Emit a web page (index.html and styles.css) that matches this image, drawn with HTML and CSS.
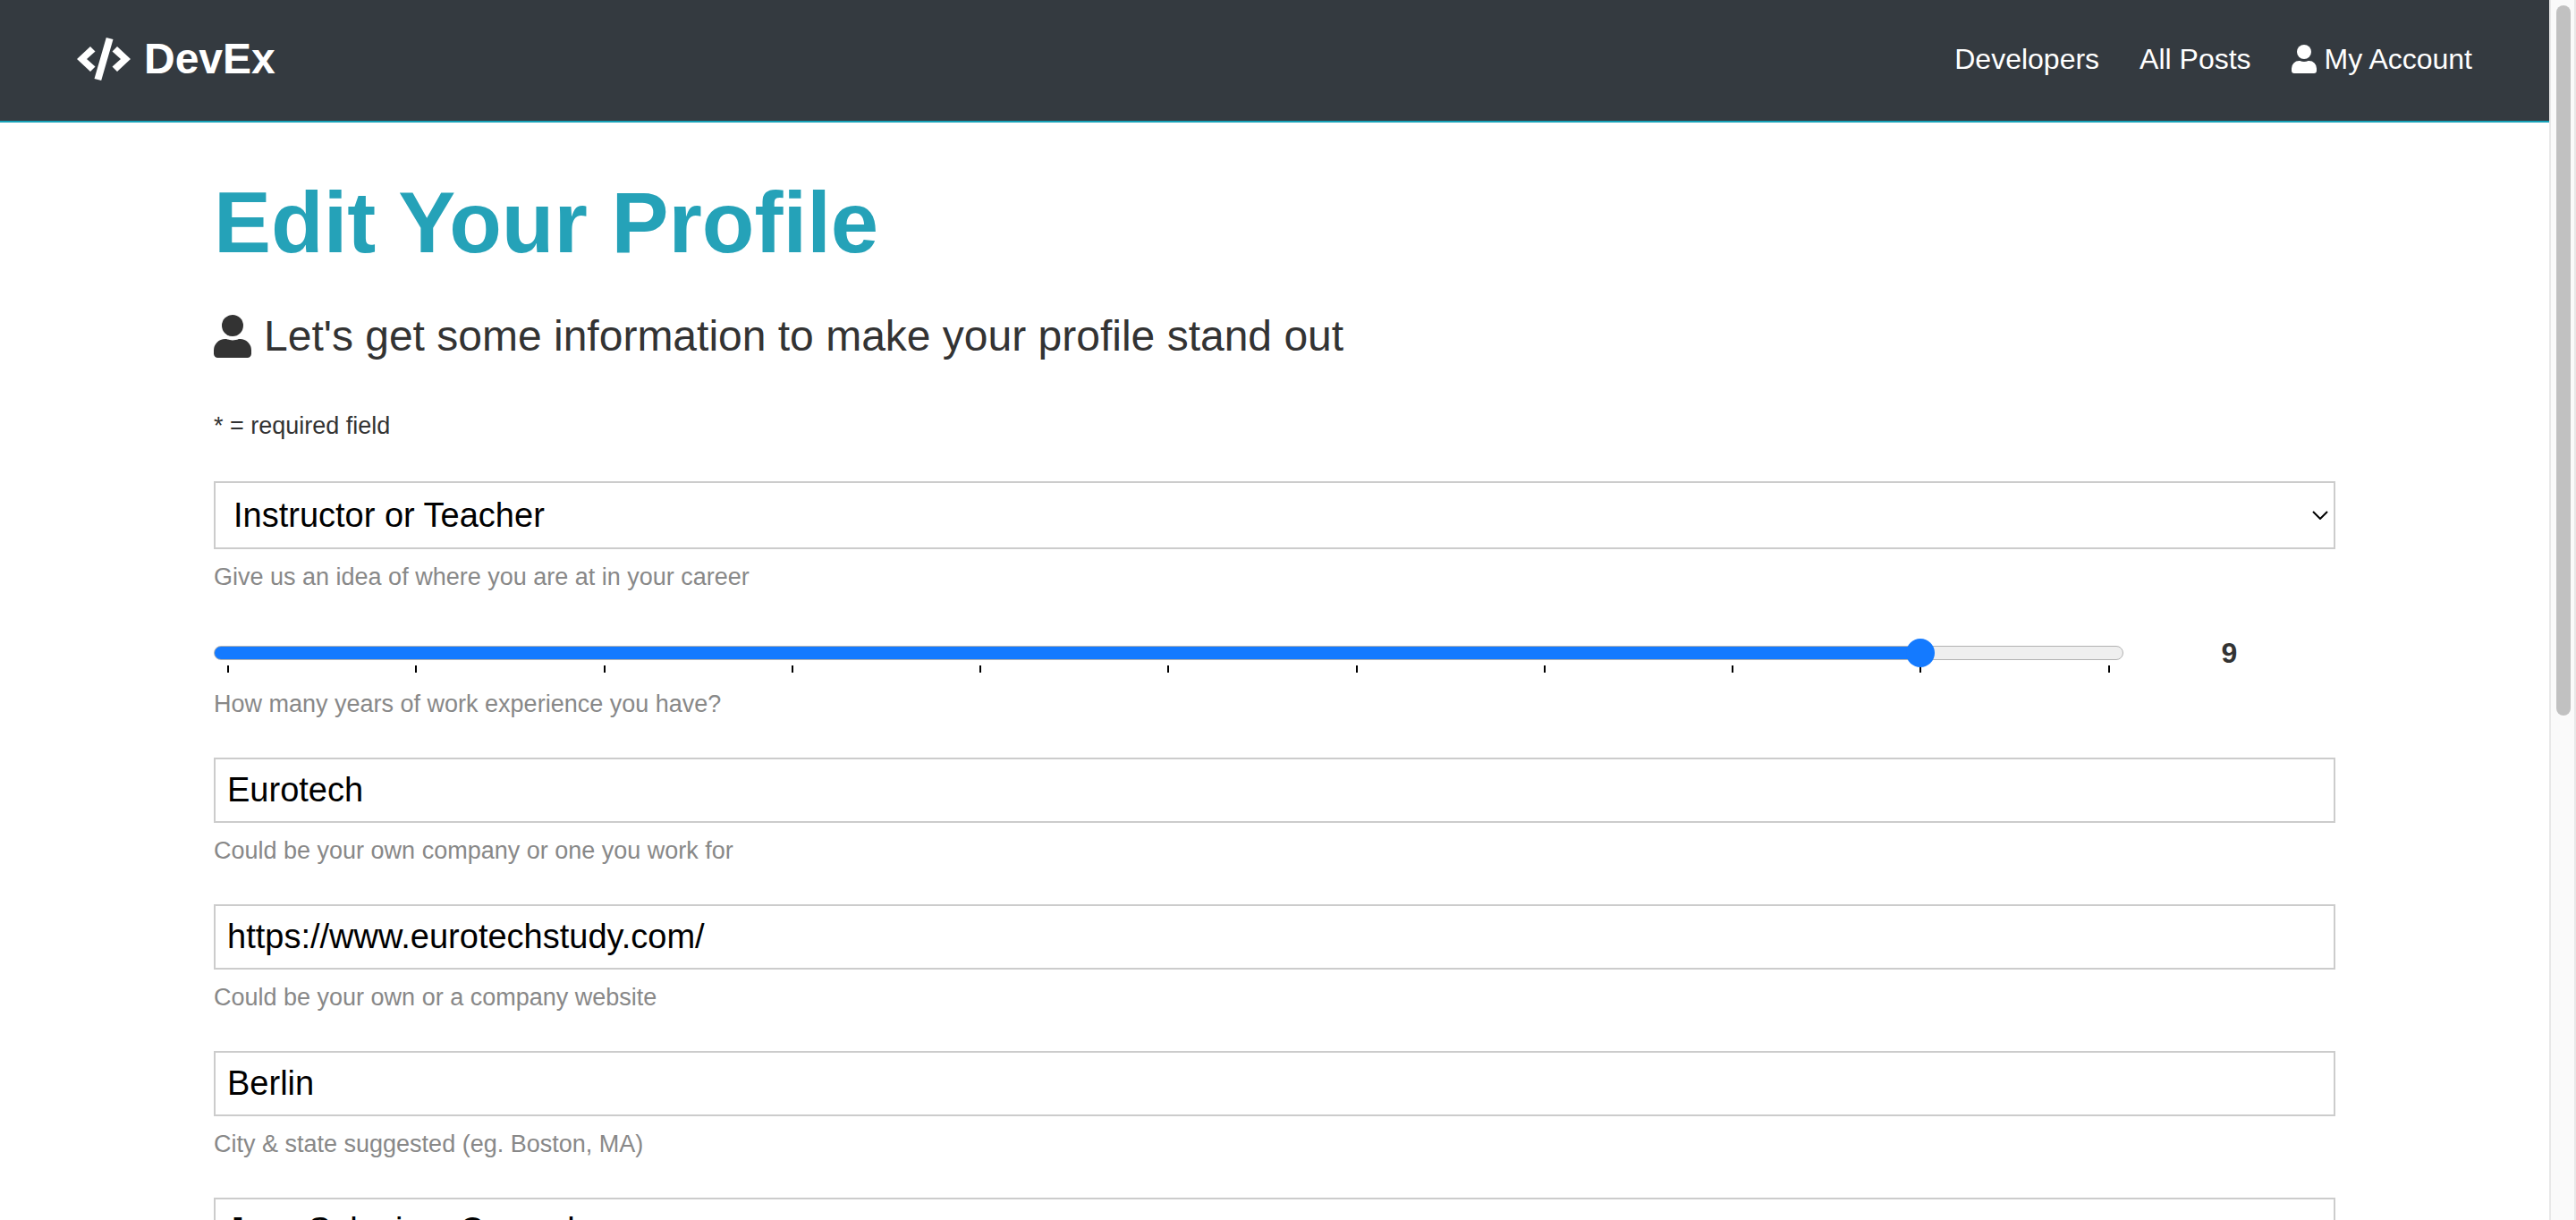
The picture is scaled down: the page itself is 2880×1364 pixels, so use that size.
FILE: index.html
```html
<!DOCTYPE html>
<html lang="en">
<head>
<meta charset="utf-8">
<title>DevEx</title>
<link rel="stylesheet" href="styles.css">
</head>
<body>
<div class="page">
  <nav class="navbar">
    <a class="logo" href="#">
      <svg class="icon-code" viewBox="0 0 60 48" aria-hidden="true">
        <path d="M15 10 20.500 15.500 11 24 20.500 32.500 15 38 0 24z M45 10 39.500 15.500 49 24 39.500 32.500 45 38 60 24z M32.800 0 40.500 2 27.200 48 19.500 46z"/>
      </svg>
      <span>DevEx</span>
    </a>
    <div class="nav-links">
      <a href="#">Developers</a>
      <a href="#">All Posts</a>
      <a href="#">
        <svg class="icon-user" viewBox="0 0 28 32" aria-hidden="true">
          <circle cx="14" cy="8" r="8"/>
          <path d="M8.400 18h1c2.900 1.300 6.300 1.300 9.200 0h1A8.400 8.400 0 0 1 28 26.400V29a3 3 0 0 1-3 3H3a3 3 0 0 1-3-3v-2.600A8.400 8.400 0 0 1 8.400 18z"/>
        </svg>
        <span>My Account</span>
      </a>
    </div>
  </nav>
  <main class="container">
    <h1>Edit Your Profile</h1>
    <p class="lead">
      <svg class="icon-user" viewBox="0 0 28 32" aria-hidden="true">
        <circle cx="14" cy="8" r="8"/>
        <path d="M8.400 18h1c2.900 1.300 6.300 1.300 9.200 0h1A8.400 8.400 0 0 1 28 26.400V29a3 3 0 0 1-3 3H3a3 3 0 0 1-3-3v-2.600A8.400 8.400 0 0 1 8.400 18z"/>
      </svg>
      <span>Let's get some information to make your profile stand out</span>
    </p>
    <p class="required">* = required field</p>
    <form class="form">
      <div class="form-group">
        <div class="select-wrap">
          <select id="status" name="status">
            <option>Instructor or Teacher</option>
          </select>
          <svg class="chevron" viewBox="0 0 18 10" aria-hidden="true"><path d="M1 1l8 8 8-8"/></svg>
        </div>
        <label class="hint" for="status">Give us an idea of where you are at in your career</label>
      </div>
      <div class="form-group">
        <div class="slider-row">
          <div class="slider">
            <input type="range" id="years" name="years" min="0" max="10" value="9">
            <div class="ticks"><i></i><i></i><i></i><i></i><i></i><i></i><i></i><i></i><i></i><i></i><i></i></div>
          </div>
          <output for="years">9</output>
        </div>
        <label class="hint" for="years">How many years of work experience you have?</label>
      </div>
      <div class="form-group">
        <input class="field" type="text" id="company" value="Eurotech">
        <label class="hint" for="company">Could be your own company or one you work for</label>
      </div>
      <div class="form-group">
        <input class="field" type="text" id="website" value="https://www.eurotechstudy.com/">
        <label class="hint" for="website">Could be your own or a company website</label>
      </div>
      <div class="form-group">
        <input class="field" type="text" id="location" value="Berlin">
        <label class="hint" for="location">City &amp; state suggested (eg. Boston, MA)</label>
      </div>
      <div class="form-group">
        <input class="field" type="text" id="skills" aria-label="Skills" value="Java,Selenium,Cucumber">
      </div>
    </form>
  </main>
</div>
<div class="scrollbar" aria-hidden="true"><div class="scroll-thumb"></div><div class="scroll-rest"></div></div>
</body>
</html>
```
FILE: styles.css
```css
* {
  box-sizing: border-box;
  margin: 0;
  padding: 0;
}

body {
  display: grid;
  grid-template-columns: minmax(0, 1fr) 30px;
  height: 100vh;
  overflow: hidden;
  background: #fff;
  color: #333;
  font-family: "Liberation Sans", Arial, Helvetica, sans-serif;
  font-size: 32px;
}

.page {
  min-height: 0;
  overflow: hidden;
}

/* Navigation */
.navbar {
  display: flex;
  align-items: center;
  justify-content: space-between;
  height: 137px;
  padding: 0 86px 4px;
  background: #343a40;
  border-bottom: 2px solid #17a2b8;
}

.navbar a {
  display: flex;
  align-items: center;
  color: #fff;
  text-decoration: none;
}

.logo {
  gap: 15px;
  font-size: 48px;
  font-weight: bold;
  line-height: 58px;
}

.icon-code {
  width: 60px;
  height: 48px;
  fill: currentColor;
}

.nav-links {
  display: flex;
  gap: 45px;
  line-height: 52px;
}

.nav-links a {
  gap: 9px;
}

.icon-user {
  width: 28px;
  height: 32px;
  fill: currentColor;
}

/* Profile form */
.container {
  max-width: 2500px;
  margin: 0 auto;
  padding: 54px 64px;
}

h1 {
  color: #25a2b8;
  font-size: 96px;
  line-height: 115px;
}

.lead {
  display: flex;
  align-items: center;
  gap: 14px;
  margin-top: 32px;
  font-size: 48px;
  line-height: 76px;
}

.lead .icon-user {
  width: 42px;
  height: 48px;
}

.required {
  margin-top: 36px;
  font-size: 27px;
  line-height: 52px;
}

.form {
  display: grid;
  gap: 39px;
  margin-top: 36px;
}

.field,
select {
  display: block;
  width: 100%;
  height: 73px;
  border: 2px solid #ccc;
  border-radius: 0;
  background: #fff;
  color: #000;
  font-family: inherit;
  font-size: 38px;
}

.field {
  padding: 0 13px;
}

.select-wrap {
  display: grid;
}

.select-wrap > * {
  grid-area: 1 / 1;
}

select {
  height: 76px;
  padding: 0 20px;
  appearance: none;
}

.chevron {
  width: 18px;
  height: 10px;
  margin-right: 8px;
  place-self: center end;
  fill: none;
  stroke: #000;
  stroke-width: 2;
  pointer-events: none;
}

.hint {
  display: block;
  margin-top: 10px;
  color: #888;
  font-size: 27px;
  line-height: 42px;
}

/* Experience slider */
.slider-row {
  display: grid;
  grid-template-columns: 9fr 1fr;
  height: 51px;
}

.slider {
  padding-top: 9px;
}

.slider input {
  position: relative;
  z-index: 1;
  display: block;
  width: 100%;
  height: 32px;
  appearance: none;
  background: none;
}

.slider input::-webkit-slider-runnable-track {
  height: 16px;
  border: 1px solid #b2b2b2;
  border-radius: 8px;
  background: linear-gradient(to right, #147aff 90%, #efefef 90%);
  background-origin: border-box;
}

.slider input::-webkit-slider-thumb {
  width: 32px;
  height: 32px;
  margin-top: -9px;
  border-radius: 50%;
  background: #147aff;
  appearance: none;
}

.ticks {
  display: flex;
  justify-content: space-between;
  margin-top: -2px;
  padding: 0 15px;
}

.ticks i {
  width: 2px;
  height: 8px;
  background: #000;
}

output {
  font-weight: bold;
  line-height: 51px;
  text-align: center;
}

/* Scroll track */
.scrollbar {
  display: flex;
  flex-direction: column;
  padding: 6px 4px 6px 6px;
  border-right: 2px solid #e8e8e8;
  border-left: 2px solid #e8e8e8;
  background: #fafafa;
}

.scroll-thumb {
  flex: 27;
  border-radius: 8px;
  background: #c1c1c1;
}

.scroll-rest {
  flex: 19;
}
```
